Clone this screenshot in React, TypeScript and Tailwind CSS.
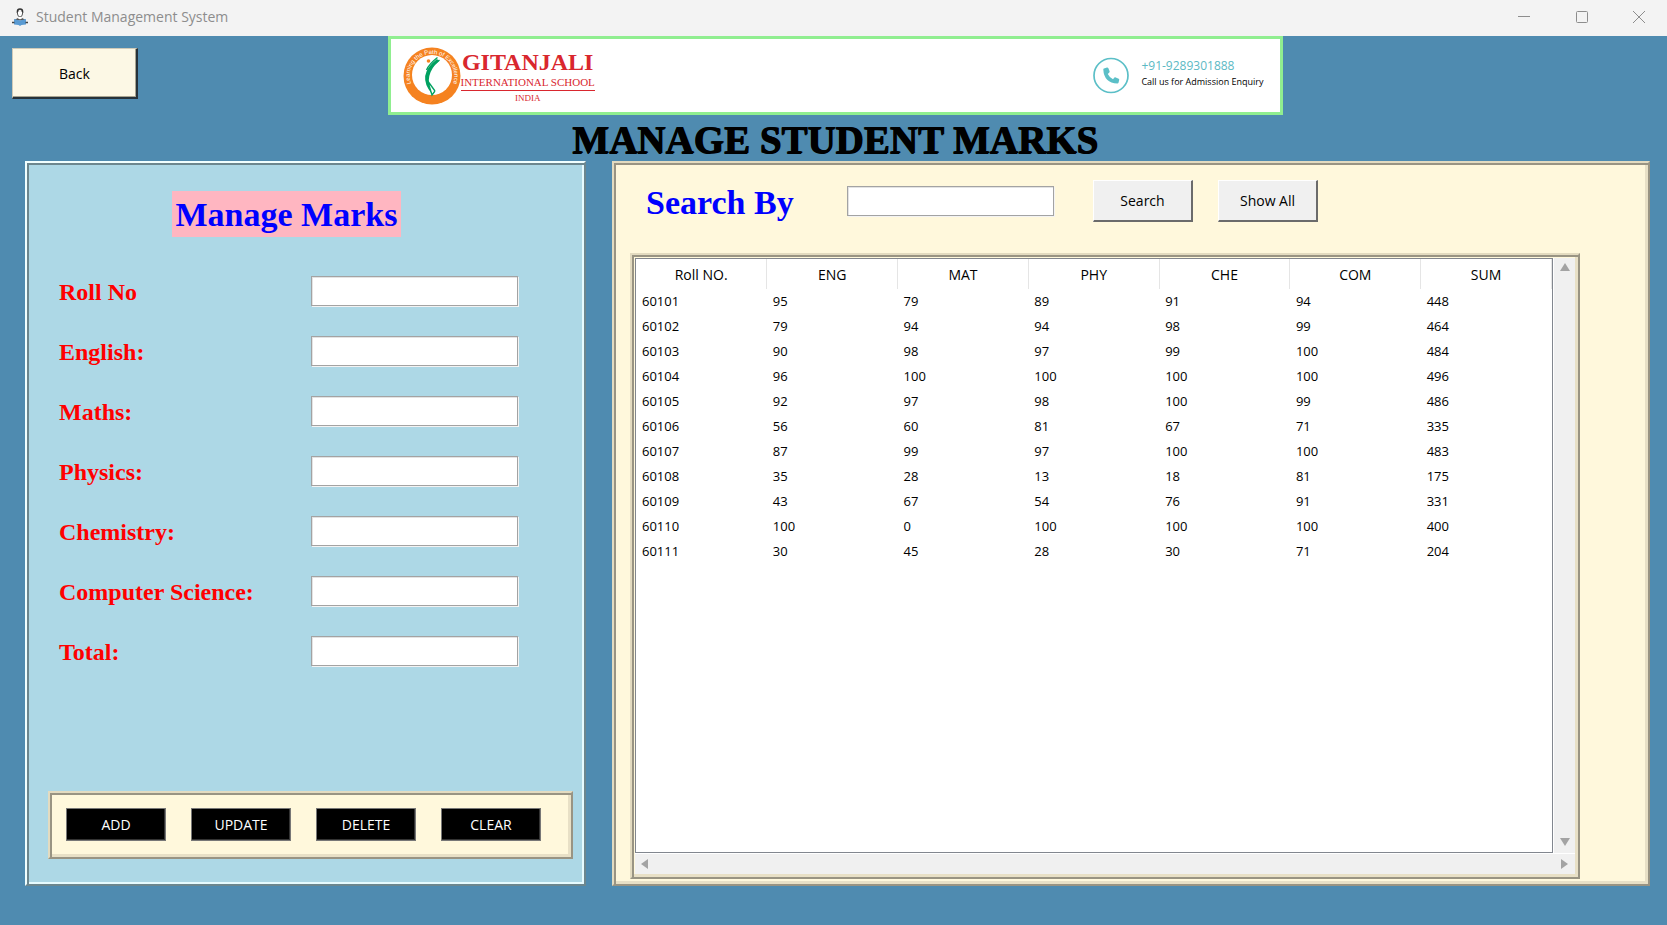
import React from "react";

const fields = ["Roll No", "English:", "Maths:", "Physics:", "Chemistry:", "Computer Science:", "Total:"];
const actions = ["ADD", "UPDATE", "DELETE", "CLEAR"];
const columns = ["Roll NO.", "ENG", "MAT", "PHY", "CHE", "COM", "SUM"];
const rows = [
  [60101, 95, 79, 89, 91, 94, 448],
  [60102, 79, 94, 94, 98, 99, 464],
  [60103, 90, 98, 97, 99, 100, 484],
  [60104, 96, 100, 100, 100, 100, 496],
  [60105, 92, 97, 98, 100, 99, 486],
  [60106, 56, 60, 81, 67, 71, 335],
  [60107, 87, 99, 97, 100, 100, 483],
  [60108, 35, 28, 13, 18, 81, 175],
  [60109, 43, 67, 54, 76, 91, 331],
  [60110, 100, 0, 100, 100, 100, 400],
  [60111, 30, 45, 28, 30, 71, 204],
];

const blueRidge =
  "border-2 border-t-[#f0ffff] border-l-[#f0ffff] border-r-[#6c878f] border-b-[#6c878f] shadow-[inset_2px_2px_#6c878f,inset_-2px_-2px_#e6fbff]";
const creamRidge =
  "border-2 border-t-[#e3dbc0] border-l-[#e3dbc0] border-r-[#999483] border-b-[#999483] shadow-[inset_2px_2px_#999483,inset_-3px_-3px_#e8e0c6]";
const entry =
  "h-[30px] w-[207px] border border-[#a3a3a3] bg-white px-1 text-[14px] shadow-[1px_1px_#f3f3f3,inset_1px_1px_#e3e3e3] outline-none";
const greyButton =
  "h-[42px] w-[100px] border-t border-l border-r-2 border-b-2 border-t-white border-l-white border-r-[#6b6b6b] border-b-[#6b6b6b] bg-[#f0f0f0] text-[14px] text-black";

function TitleBar() {
  return (
    <header className="flex h-9 items-center bg-[#f3f3f3] pb-[3px] pl-3 text-[#8d8d8d]">
      <svg width="16" height="20" viewBox="0 0 16 20" aria-hidden="true">
        <path d="M5.500 6V4.500Q5.500 2 8 2T10.500 4.500V6" fill="none" stroke="#333" strokeWidth="1.600" />
        <path d="M5.500 5V7Q6 10 8 10T10.500 7V5" fill="#fff" stroke="#555" strokeWidth="1" />
        <path d="M2 13.500Q3 12 6 11L8 12.500L10 11Q13 12 14 13.500Z" fill="#555" />
        <path d="M6.500 10H9.500V12H6.500Z" fill="#fff" />
        <path d="M2 12L8 13.500L14 12V17.500L9.500 18L8 19L6.500 18L2 17.500Z" fill="#5a9bd3" />
        <path d="M0 15.500H2.500M13.500 15.500H16" stroke="#444" strokeWidth="1.600" />
      </svg>
      <span className="ml-2 flex-1 text-[14px] leading-5">Student Management System</span>
      <button aria-label="Minimize" className="flex h-8 w-[58px] items-center justify-center">
        <svg width="12" height="12" viewBox="0 0 12 12" stroke="currentColor"><path d="M0 5.500H12" /></svg>
      </button>
      <button aria-label="Maximize" className="flex h-8 w-[58px] items-center justify-center">
        <svg width="12" height="12" viewBox="0 0 12 12" fill="none" stroke="currentColor"><rect x=".5" y=".5" width="11" height="11" rx="1" /></svg>
      </button>
      <button aria-label="Close" className="flex h-8 w-[56px] items-center justify-center">
        <svg width="12" height="12" viewBox="0 0 12 12" stroke="currentColor"><path d="M0 0L12 12M12 0L0 12" /></svg>
      </button>
    </header>
  );
}

function Emblem() {
  return (
    <svg width="58" height="58" viewBox="0 0 58 58" aria-hidden="true">
      <defs>
        <path id="motto" d="M8.500 38A22.300 22.300 0 1 1 49.500 38" />
      </defs>
      <circle cx="29" cy="29" r="28.500" fill="#f58220" />
      <circle cx="29" cy="28" r="20" fill="#fff" />
      <text fill="#fff" fontSize="6" fontFamily="Liberation Sans">
        <textPath href="#motto" startOffset="50%" textAnchor="middle">Learning the Path of Excellence</textPath>
      </text>
      <path d="M34 12Q13 28 29 47Q20 28 36 14Z" fill="#00a160" />
      <path d="M34.500 10.500Q26 17 23.500 23M36.500 13L25 23M25 35L29 48L32 44M24 33L32 44" fill="none" stroke="#00a160" strokeWidth="1.300" />
      <circle cx="25.500" cy="14" r="1.800" fill="#f58220" />
    </svg>
  );
}

function Banner() {
  return (
    <div className="flex h-[79px] w-[895px] items-center border-3 border-[#90ee90] bg-white pr-4 pl-3">
      <Emblem />
      <div className="flex flex-col items-center pt-1 font-['Liberation_Serif',serif] text-[#d9272e]">
        <span className="text-[24px] leading-6 font-bold">GITANJALI</span>
        <span className="border-b border-[#d9272e] text-[11px] leading-[16px]">INTERNATIONAL SCHOOL</span>
        <span className="text-[9px] leading-[14px]">INDIA</span>
      </div>
      <svg className="ml-auto" width="36" height="37" viewBox="0 0 36 37" aria-hidden="true">
        <circle cx="18" cy="18.500" r="17" fill="none" stroke="#5bbfc7" strokeWidth="1.700" />
        <path d="M11 11.500L14 10.500Q15 10.400 15.400 11.300L16.600 14.300Q16.800 15 16.300 15.600L14.800 17Q16.500 20.500 20 22.300L21.400 20.600Q22 20 22.800 20.400L25.700 21.800Q26.400 22.200 26.200 23L25.500 25.700Q25.300 26.500 24.400 26.500Q11 26 10.300 12.500Q10.300 11.700 11 11.500Z" fill="#5bbfc7" />
      </svg>
      <div className="ml-3 flex flex-col pb-1">
        <span className="text-[12px] leading-4 text-[#5bb9c4]">+91-9289301888</span>
        <span className="text-[9px] leading-4 text-black">Call us for Admission Enquiry</span>
      </div>
    </div>
  );
}

function MarksForm() {
  return (
    <section className={`flex w-[561px] shrink-0 flex-col p-[22px] pt-7 pb-[25px] ${blueRidge} bg-[#add8e6]`}>
      <h2 className="mr-[38px] self-center bg-[#ffb6c1] px-1 pt-[2px] font-['Liberation_Serif',serif] text-[34px] leading-[44px] font-bold text-[#0000ff]">
        Manage Marks
      </h2>
      <div className="mt-[39px] flex flex-col gap-[30px] pl-[10px]">
        {fields.map((f) => (
          <label key={f} className="flex h-[30px] items-center">
            <span className="w-[252px] pt-[2px] font-['Liberation_Serif',serif] text-[24px] leading-[30px] font-bold text-[#ff0000]">{f}</span>
            <input className={entry} />
          </label>
        ))}
      </div>
      <div className={`mt-auto mr-[-11px] ml-[-1px] flex h-[68px] gap-[25px] bg-[#fff8dc] px-4 pt-[15px] ${creamRidge}`}>
        {actions.map((a) => (
          <button key={a} className="h-[33px] w-[100px] border border-[#777] bg-black text-[14px] text-white shadow-[inset_-1px_-1px_#333]">
            {a}
          </button>
        ))}
      </div>
    </section>
  );
}

const arrows = {
  up: "M5 0L10 8H0Z",
  down: "M0 0H10L5 8Z",
  left: "M8 0V10L1 5Z",
  right: "M1 0V10L8 5Z",
};

function Arrow({ dir }: { dir: keyof typeof arrows }) {
  return (
    <button aria-label={`Scroll ${dir}`} className="flex size-5 items-center justify-center">
      <svg width="10" height="10" viewBox="0 0 10 10"><path d={arrows[dir]} fill="#a3a3a3" /></svg>
    </button>
  );
}

function Results() {
  return (
    <section className={`flex flex-1 flex-col pt-[15px] pr-[68px] pb-[5px] pl-4 ${creamRidge} bg-[#fff8dc]`}>
      <div className="flex items-center pl-4">
        <label htmlFor="query" className="w-[201px] pt-1 font-['Liberation_Serif',serif] text-[34px] leading-[42px] font-bold text-[#0000ff]">
          Search By
        </label>
        <input id="query" className={entry} />
        <button className={`ml-[39px] ${greyButton}`}>Search</button>
        <button className={`ml-[25px] ${greyButton}`}>Show All</button>
      </div>
      <div className={`mt-[29px] flex flex-1 flex-col p-[3px] ${creamRidge}`}>
        <div className="flex flex-1">
          <div className="flex-1 border border-[#82878f] bg-white">
            <table className="w-full table-fixed border-collapse text-[13px] text-black">
              <thead>
                <tr className="h-[30px]">
                  {columns.map((c) => (
                    <th key={c} className="border-r border-[#e5e5e5] p-0 text-[14px] font-normal">{c}</th>
                  ))}
                </tr>
              </thead>
              <tbody>
                {rows.map((r) => (
                  <tr key={r[0]} className="h-[25px]">
                    {r.map((v, i) => (
                      <td key={i} className="p-0 pl-[6px]">{v}</td>
                    ))}
                  </tr>
                ))}
              </tbody>
            </table>
          </div>
          <div className="flex w-[22px] flex-col items-center justify-between border-l border-white bg-[#f0f0f0]">
            <Arrow dir="up" />
            <Arrow dir="down" />
          </div>
        </div>
        <div className="flex h-[21px] items-center justify-between border-t border-white bg-[#f0f0f0]">
          <Arrow dir="left" />
          <Arrow dir="right" />
        </div>
      </div>
    </section>
  );
}

export default function App() {
  return (
    <div className="flex min-h-screen flex-col bg-[#4f8bb0] font-['Open_Sans',sans-serif]">
      <TitleBar />
      <div className="grid grid-cols-[1fr_auto_1fr] pl-[3px]">
        <button className="mt-3 ml-[9px] h-[51px] w-[126px] border-t border-l border-r-2 border-b-2 border-t-[#cfcab8] border-l-[#cfcab8] border-r-[#26323a] border-b-[#26323a] bg-[#fcf8e5] text-[14px] text-black shadow-[inset_-1px_-1px_#a8a490]">
          Back
        </button>
        <Banner />
      </div>
      <h1 className="pt-1 pl-[3px] text-center font-['Liberation_Serif',serif] text-[39px] leading-[42px] font-bold text-black [text-shadow:1px_0_#000,0_1px_#000]">
        MANAGE STUDENT MARKS
      </h1>
      <main className="flex flex-1 gap-[26px] pr-[17px] pb-[39px] pl-[25px]">
        <MarksForm />
        <Results />
      </main>
    </div>
  );
}
